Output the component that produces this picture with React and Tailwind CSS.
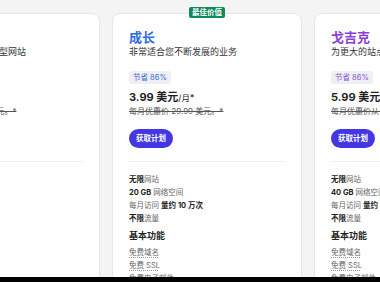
import React from 'react';

const plans = [
  {
    id: 'starter',
    name: '入门',
    nameColor: 'text-[#2d6be0]',
    chipColor: 'text-[#3f68d8]',
    tagline: '非常适合个人和小型网站',
    price: '2.99',
    was: '每月优惠价 9.99 美元。*',
    sites: '1 个',
    storage: '10 GB',
    visits: '1 万次',
  },
  {
    id: 'growth',
    name: '成长',
    nameColor: 'text-[#2d6be0]',
    chipColor: 'text-[#3f68d8]',
    tagline: '非常适合您不断发展的业务',
    price: '3.99',
    was: '每月优惠价 29.99 美元。*',
    sites: '无限',
    storage: '20 GB',
    visits: '10 万次',
    badge: '最佳价值',
  },
  {
    id: 'geek',
    name: '戈吉克',
    nameColor: 'text-[#8b3fd9]',
    chipColor: 'text-[#8b4fd6]',
    tagline: '为更大的站点提供更多资源',
    price: '5.99',
    was: '每月优惠价从 39.99 美元。*',
    sites: '无限',
    storage: '40 GB',
    visits: '40 万次',
  },
];

const Dotted = ({ children }) => (
  <span className="underline decoration-dotted decoration-[#999] underline-offset-2">{children}</span>
);

const PlanCard = ({ plan }) => (
  <div className="relative flex w-[190px] shrink-0 flex-col rounded-[8px] border border-[#e6e6e6] bg-white px-[16px] pt-[15px] pb-[20px]">
    {plan.badge && (
      <div className="absolute left-1/2 top-[-7px] -translate-x-1/2 rounded-[2px] bg-[#0c8a5c] px-[3px] text-[7.5px] font-bold leading-[11px] text-white">
        {plan.badge}
      </div>
    )}
    <div className={`text-[13px] font-bold leading-[16px] ${plan.nameColor}`}>{plan.name}</div>
    <div className="mt-[1px] whitespace-nowrap text-[9px] leading-[12px] text-[#333]">{plan.tagline}</div>

    <div className="mt-[13px] flex">
      <span className={`block rounded-[3px] bg-[#eef0f4] px-[4px] text-[7.5px] leading-[13px] ${plan.chipColor}`}>
        节省 86%
      </span>
    </div>

    <div className="mt-[4px] whitespace-nowrap leading-[14px] text-[#1f1f1f]">
      <span className="text-[11px] font-bold">{plan.price} 美元</span>
      <span className="text-[8.5px]">/月*</span>
    </div>
    <div className="whitespace-nowrap text-[8px] leading-[12px] text-[#555] line-through">{plan.was}</div>

    <div className="mt-[12px] flex">
      <button className="flex h-[19px] items-center rounded-full bg-[#4237e3] px-[7px] text-[7.5px] font-bold text-white">
        获取计划
      </button>
    </div>

    <div className="mt-[13px] border-t border-[#eeeeee]" />

    {/* Features */}
    <div className="mt-[11px] whitespace-nowrap text-[7.5px] leading-[13px] text-[#666]">
      <div><b className="text-[#222]">{plan.sites}</b>网站</div>
      <div><b className="text-[#222]">{plan.storage}</b> 网络空间</div>
      <div>每月访问 <b className="text-[#222]">量约 {plan.visits}</b></div>
      <div><b className="text-[#222]">不限</b>流量</div>
    </div>

    <div className="mt-[4px] text-[9px] font-bold leading-[14px] text-[#222]">基本功能</div>
    <div className="mt-[3px] whitespace-nowrap text-[7.5px] leading-[13px] text-[#666]">
      <div><Dotted>免费域名</Dotted></div>
      <div><Dotted>免费 SSL</Dotted></div>
      <div><Dotted>免费电子邮件</Dotted></div>
      <div><Dotted>免费 CDN</Dotted></div>
    </div>
  </div>
);

export default function App() {
  return (
    <div className="flex h-[282px] w-[380px] flex-col overflow-hidden bg-black font-['Inter','Noto_Sans_CJK_SC',sans-serif]">
      <div className="h-[277px] shrink-0 overflow-hidden bg-[#f4f4f4] pt-[13px]">
        <div className="ml-[-90px] flex gap-[12px]">
          {plans.map(plan => (
            <PlanCard key={plan.id} plan={plan} />
          ))}
        </div>
      </div>
      <div className="h-[5px] bg-black" />
    </div>
  );
}
